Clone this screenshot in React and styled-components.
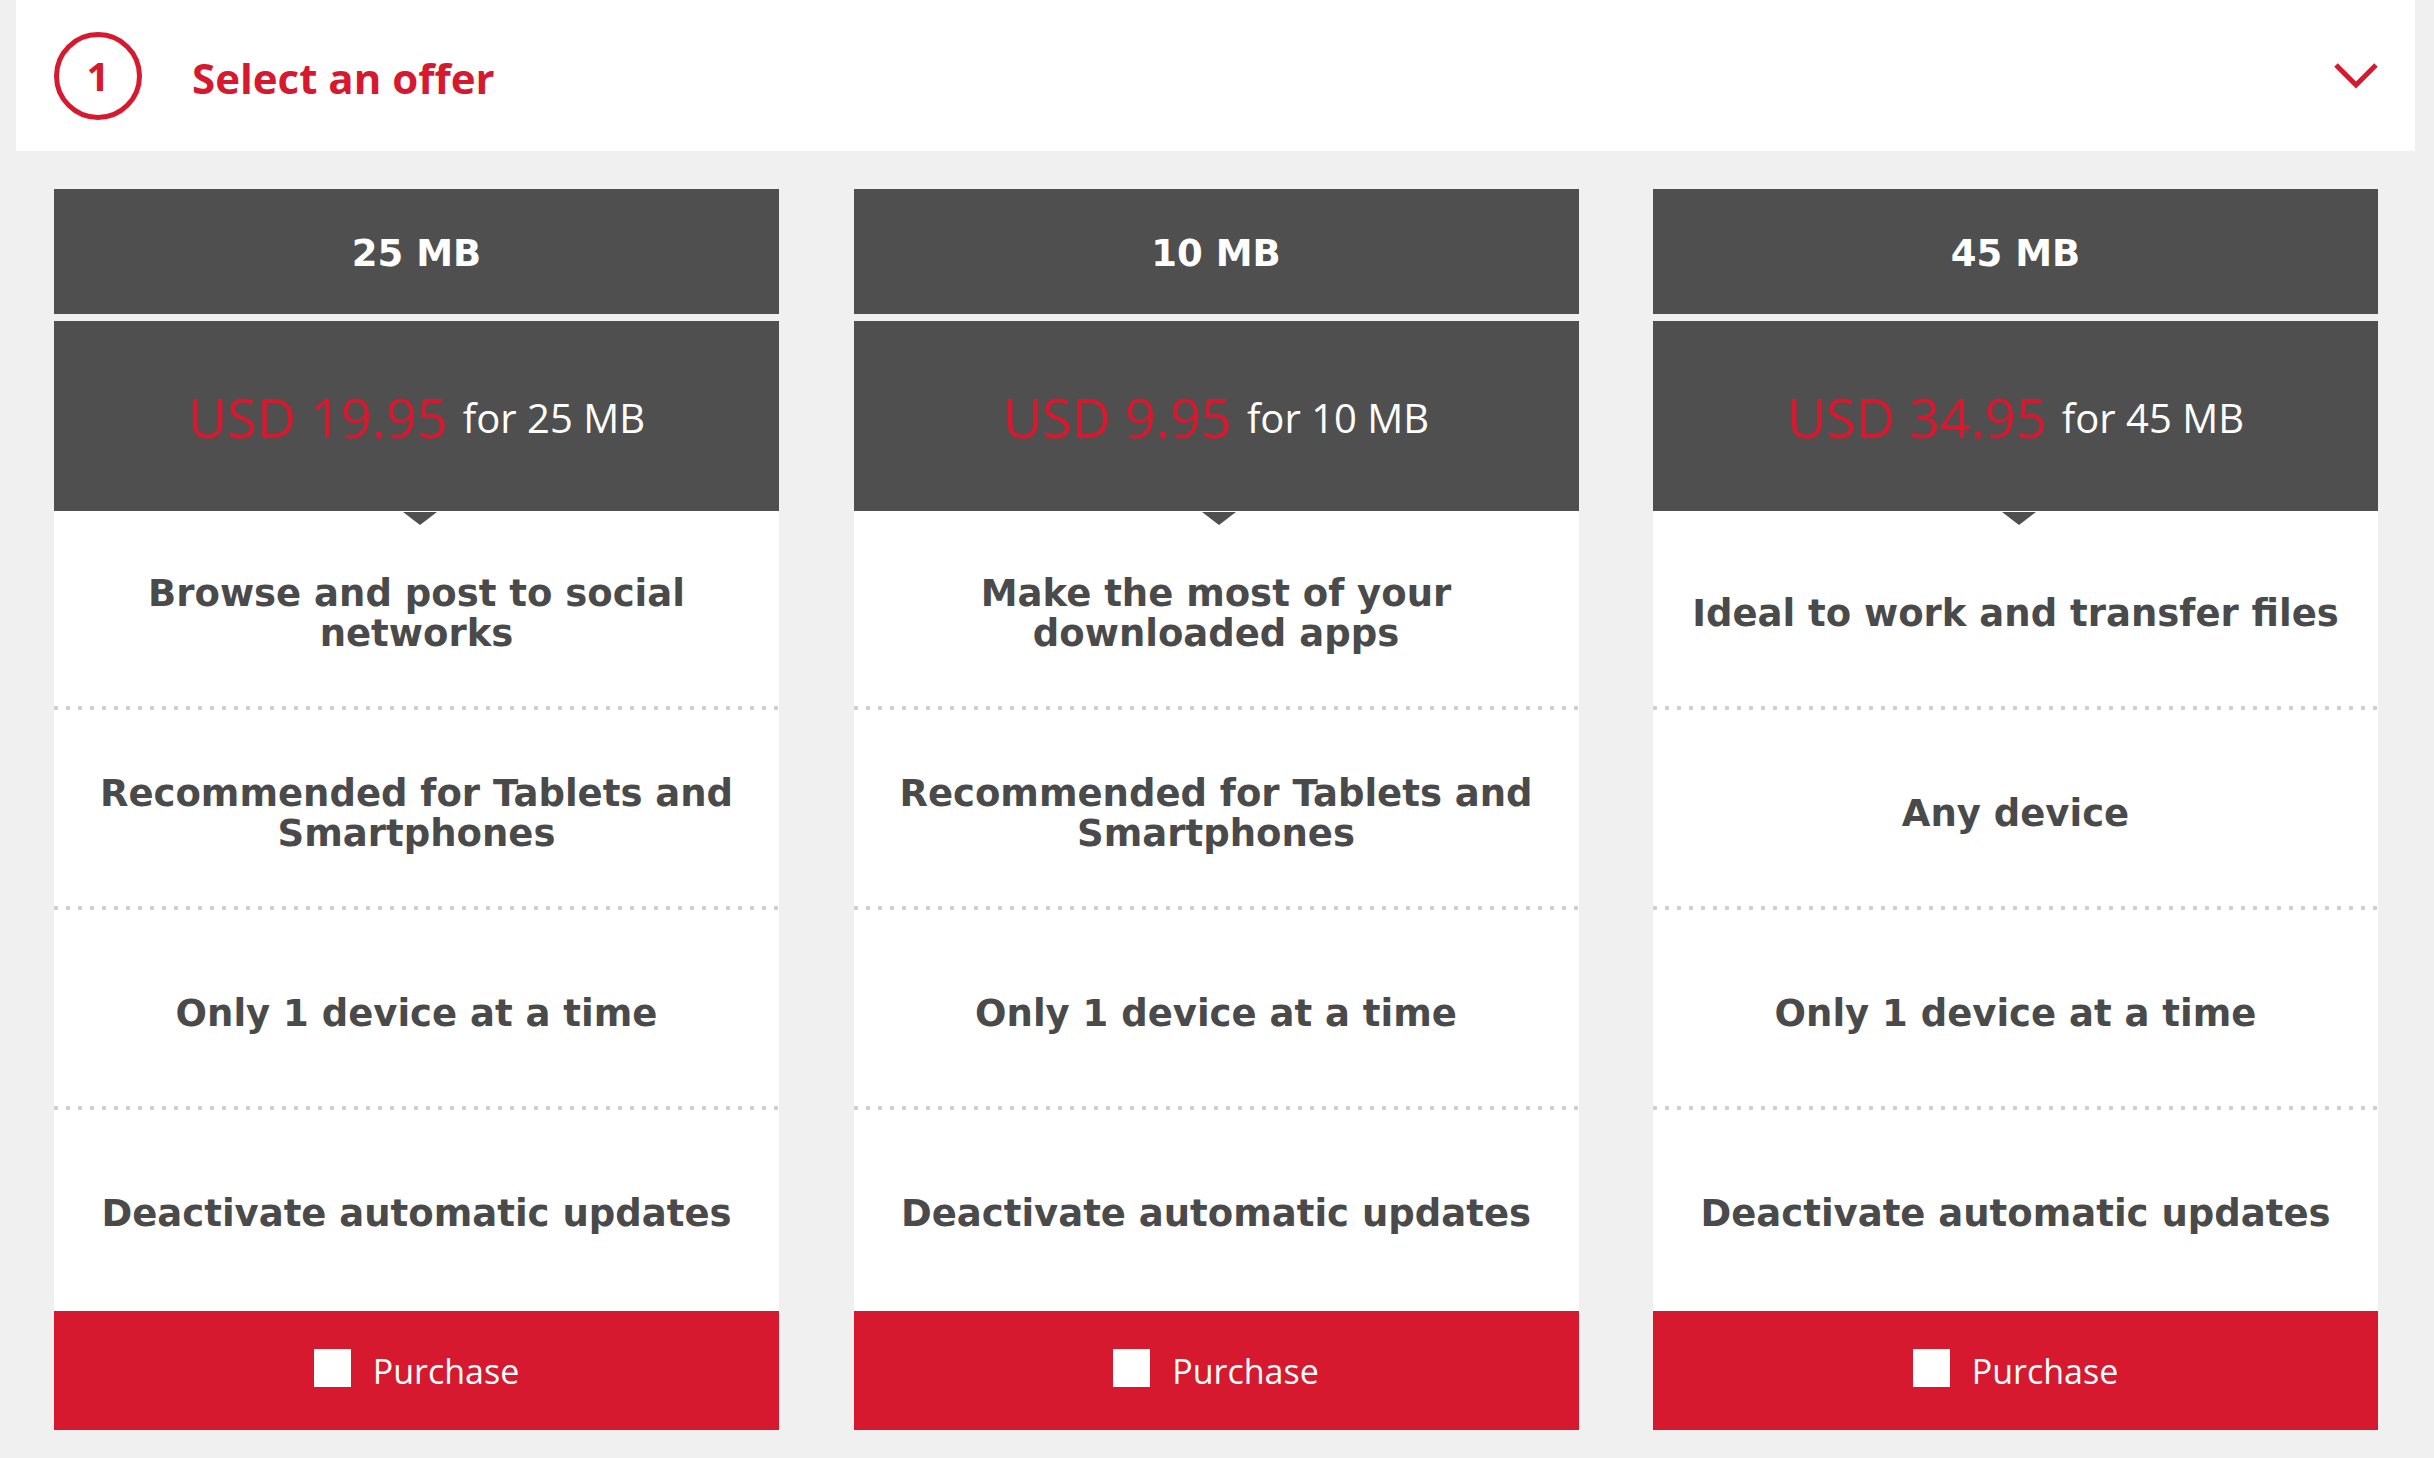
import styled, { createGlobalStyle } from "styled-components";

const RED = "#d6192e";
const DARK = "#4f4f4f";

const GlobalStyle = createGlobalStyle`
  html, body {
    margin: 0;
    padding: 0;
    background: #f0f0f0;
  }
  * {
    box-sizing: border-box;
  }
`;

const Page = styled.div`
  padding: 0 19px 28px 16px;
  font-family: "DejaVu Sans", Verdana, sans-serif;
`;

const StepHeader = styled.header`
  display: flex;
  align-items: center;
  height: 151px;
  padding: 0 37px 0 38px;
  background: #fff;
`;

const StepNumber = styled.div`
  display: flex;
  align-items: center;
  justify-content: center;
  width: 88px;
  height: 88px;
  border: 5px solid ${RED};
  border-radius: 50%;
  color: ${RED};
  font-family: "Open Sans", sans-serif;
  font-weight: 700;
  font-size: 40px;
  line-height: 1;
`;

const StepTitle = styled.h2`
  flex: 1;
  margin: 3px 0 0 50px;
  color: ${RED};
  font-family: "Open Sans", sans-serif;
  font-weight: 700;
  font-size: 42px;
`;

const Chevron = styled.svg`
  width: 44px;
  height: 26px;
  display: block;
`;

const Offers = styled.section`
  display: grid;
  grid-template-columns: repeat(3, 1fr);
  gap: 74.5px;
  padding: 38px 37px 0 38px;
`;

const Card = styled.article`
  display: flex;
  flex-direction: column;
  gap: 7px;
`;

const CardTitle = styled.div`
  display: flex;
  align-items: center;
  justify-content: center;
  height: 125px;
  padding-top: 4px;
  background: ${DARK};
  color: #fff;
  font-weight: 700;
  font-size: 37px;
`;

const PriceBox = styled.div`
  position: relative;
  display: flex;
  align-items: center;
  justify-content: center;
  height: 190px;
  padding-top: 2px;
  background: ${DARK};
  font-family: "Open Sans", sans-serif;
  color: #fff;
  white-space: nowrap;

  &::after {
    content: "";
    position: absolute;
    top: calc(100% + 1px);
    left: calc(50% - 14px);
    border-left: 17px solid transparent;
    border-right: 17px solid transparent;
    border-top: 13px solid ${DARK};
  }
`;

const Price = styled.span`
  color: ${RED};
  font-weight: 400;
  font-size: 54px;
  margin-right: 15px;
`;

const Quota = styled.span`
  font-size: 40px;
`;

const Body = styled.div`
  display: flex;
  flex-direction: column;
  margin-top: -7px;
  background: #fff;
`;

const Feature = styled.div`
  display: flex;
  align-items: center;
  justify-content: center;
  height: 200px;
  padding: 6px 20px 0;
  text-align: center;
  color: #4a4a4a;
  font-weight: 700;
  font-size: 37px;
  line-height: 40px;
  background-image: ${(p) =>
    p.$last ? "none" : "radial-gradient(circle, #cfcfcf 2px, transparent 2.6px)"};
  background-size: 12px 6px;
  background-repeat: repeat-x;
  background-position: -4px 100%;
`;

const PurchaseButton = styled.button`
  display: flex;
  align-items: center;
  justify-content: center;
  gap: 22px;
  height: 119px;
  border: 0;
  background: ${RED};
  color: #fff;
  font-family: "Open Sans", sans-serif;
  font-weight: 400;
  font-size: 34px;
  cursor: pointer;
`;

const Box = styled.span`
  width: 37px;
  height: 38px;
  background: #fff;
  margin-top: -6px;
`;

const offers = [
  {
    size: "25 MB",
    price: "USD 19.95",
    features: [
      "Browse and post to social networks",
      "Recommended for Tablets and Smartphones",
      "Only 1 device at a time",
      "Deactivate automatic updates",
    ],
  },
  {
    size: "10 MB",
    price: "USD 9.95",
    features: [
      "Make the most of your downloaded apps",
      "Recommended for Tablets and Smartphones",
      "Only 1 device at a time",
      "Deactivate automatic updates",
    ],
  },
  {
    size: "45 MB",
    price: "USD 34.95",
    features: [
      "Ideal to work and transfer files",
      "Any device",
      "Only 1 device at a time",
      "Deactivate automatic updates",
    ],
  },
];

export default function App() {
  return (
    <Page>
      <GlobalStyle />
      <StepHeader>
        <StepNumber>1</StepNumber>
        <StepTitle>Select an offer</StepTitle>
        <Chevron viewBox="0 0 44 26">
          <path d="M2 2 L22 22 L42 2" fill="none" stroke={RED} strokeWidth="5" />
        </Chevron>
      </StepHeader>
      <Offers>
        {offers.map((o) => (
          <Card key={o.size}>
            <CardTitle>{o.size}</CardTitle>
            <PriceBox>
              <Price>{o.price}</Price>
              <Quota>for {o.size}</Quota>
            </PriceBox>
            <Body>
              {o.features.map((f, i) => (
                <Feature key={i} $last={i === o.features.length - 1}>
                  {f}
                </Feature>
              ))}
              <PurchaseButton>
                <Box />
                Purchase
              </PurchaseButton>
            </Body>
          </Card>
        ))}
      </Offers>
    </Page>
  );
}
